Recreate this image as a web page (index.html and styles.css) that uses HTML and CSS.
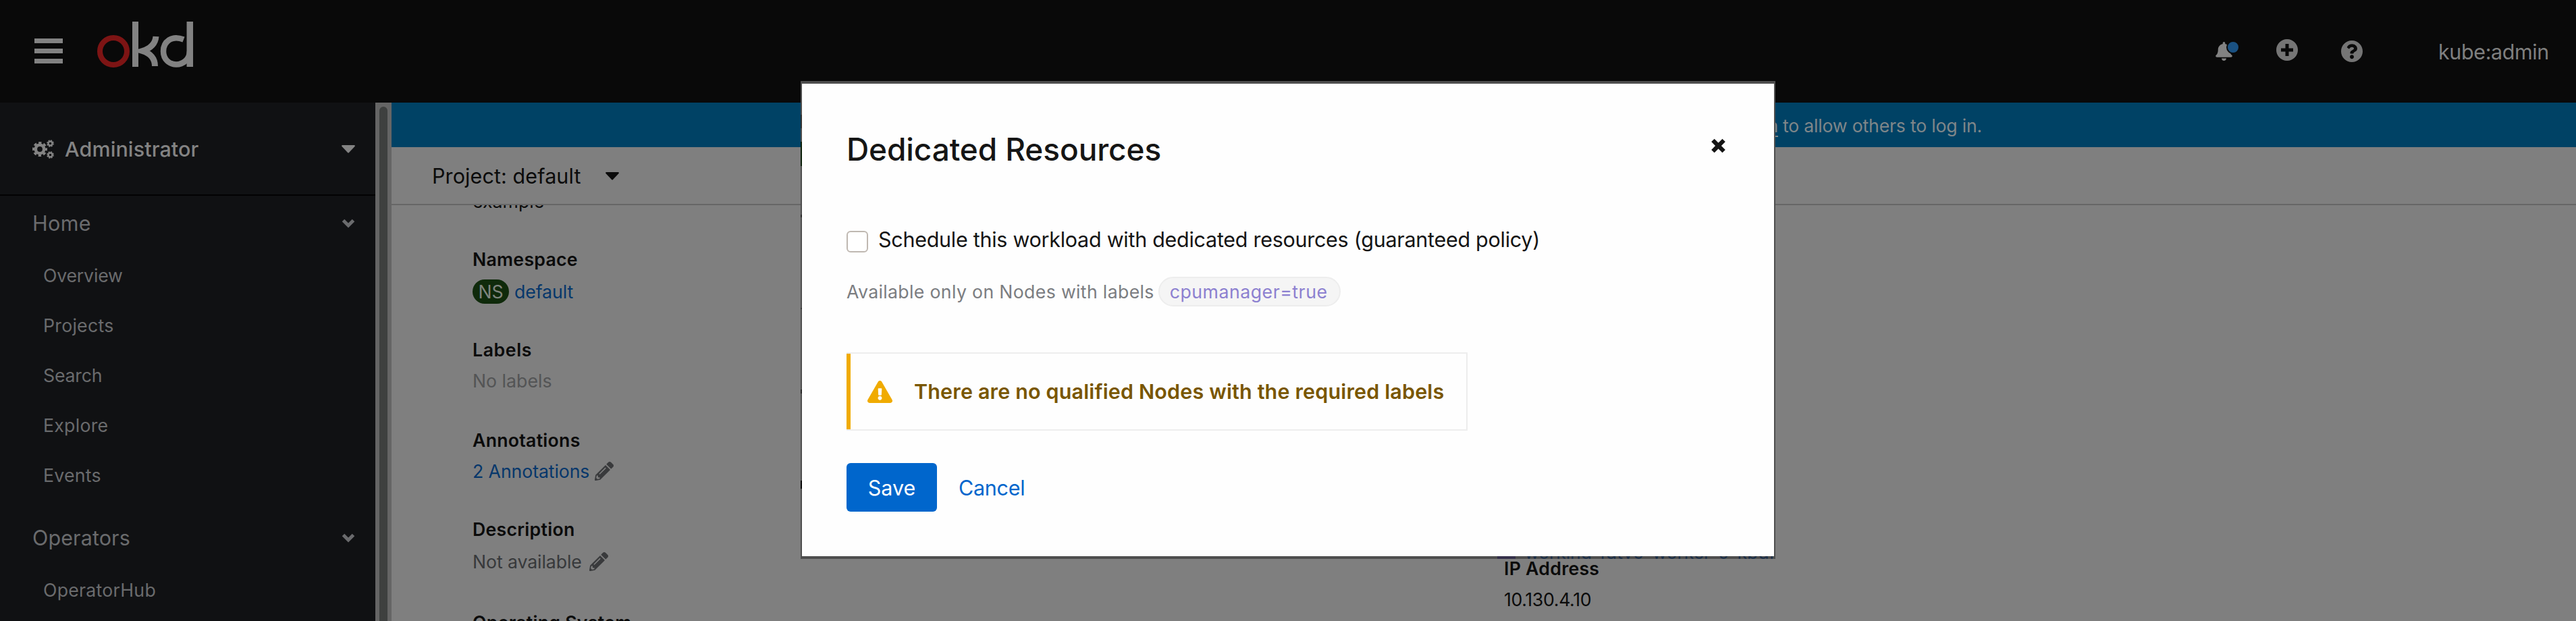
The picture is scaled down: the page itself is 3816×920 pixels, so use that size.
FILE: index.html
```html
<!DOCTYPE html>
<html lang="en">
<head>
<meta charset="utf-8">
<title>OKD</title>
<link rel="stylesheet" href="styles.css">
</head>
<body>
<svg class="defs" width="0" height="0" aria-hidden="true">
  <symbol id="pencil" viewBox="0 0 512 512"><path d="M497.9 142.1l-46.1 46.1c-4.7 4.7-12.3 4.7-17 0l-111-111c-4.7-4.7-4.7-12.3 0-17l46.1-46.1c18.7-18.7 49.1-18.7 67.9 0l60.1 60.1c18.8 18.7 18.8 49.1 0 67.9zM284.2 99.8L21.6 362.4.4 483.9c-2.9 16.4 11.4 30.6 27.8 27.8l121.5-21.3 262.6-262.6c4.7-4.7 4.7-12.3 0-17l-111-111c-4.8-4.7-12.4-4.7-17.1 0zM124.1 339.9c-5.5-5.5-5.5-14.3 0-19.8l154-154c5.5-5.5 14.3-5.5 19.8 0s5.5 14.3 0 19.8l-154 154c-5.5 5.5-14.3 5.5-19.8 0zM88 424h48v36.3l-64.5 11.3-31.1-31.1L51.7 376H88v48z"/></symbol>
  <symbol id="chevron" viewBox="0 0 20 14"><path d="M2.500 2.500 10 10l7.500-7.500" fill="none" stroke="currentColor" stroke-width="5"/></symbol>
  <symbol id="caret" viewBox="0 0 20 12"><path d="M1 0h18q1.500 .5 .5 2L11 11q-1 1-2 0L.5 2Q-.5 .5 1 0z"/></symbol>
</svg>

<header class="masthead">
  <svg class="burger" viewBox="0 0 44 40"><path d="M1 1h42v7H1zM1 16h42v7H1zM1 31h42v7H1z"/></svg>
  <svg class="logo" viewBox="144 30 144 72">
    <ellipse cx="168" cy="76" rx="20" ry="20" stroke="#7d1414" stroke-width="8"/>
    <g stroke="#828282">
      <line x1="200.500" y1="32" x2="200.500" y2="99" stroke-width="9"/>
      <path stroke-width="9" d="M231 54C230 66 222 72 211 75.500 222 79 229.500 86 229.500 98"/>
      <path stroke-width="8.500" d="M272 58.500C254 51.500 242 62 242 76 242 88 251 95.500 261 95.500S281 88 281 76"/>
      <line x1="281.300" y1="32" x2="281.300" y2="99" stroke-width="9.500"/>
    </g>
  </svg>
  <div class="tools">
    <span class="bell">
      <svg viewBox="0 0 448 512"><path d="M224 512c35.320 0 63.970-28.650 63.970-64H160.030c0 35.350 28.650 64 63.970 64zm215.390-149.710c-19.320-20.760-55.470-51.990-55.470-154.290 0-77.700-54.480-139.900-127.940-155.160V32c0-17.670-14.320-32-31.980-32s-31.980 14.330-31.980 32v20.840C118.560 68.100 64.080 130.300 64.080 208c0 102.300-36.150 133.530-55.470 154.290-6 6.450-8.660 14.160-8.610 21.710.11 16.400 12.980 32 32.100 32h383.800c19.120 0 32-15.600 32.100-32 .05-7.550-2.610-15.270-8.610-21.710z"/></svg>
      <i class="dot"></i>
    </span>
    <svg class="plus" viewBox="0 0 32 32"><path fill-rule="evenodd" d="M16 0a16 16 0 1 0 0 32 16 16 0 0 0 0-32zm-2.500 7h5v6.500H25v5h-6.500V25h-5v-6.500H7v-5h6.500z"/></svg>
    <svg class="help" viewBox="8 8 496 496"><path d="M504 256c0 136.997-111.043 248-248 248S8 392.997 8 256C8 119.083 119.043 8 256 8s248 111.083 248 248zM262.655 90c-54.497 0-89.255 22.957-116.549 63.758-3.536 5.286-2.353 12.415 2.715 16.258l34.699 26.310c5.205 3.947 12.621 3.008 16.665-2.122 17.864-22.658 30.113-35.797 57.303-35.797 20.429 0 45.698 13.148 45.698 32.958 0 14.976-12.363 22.667-32.534 33.976C247.128 238.528 216 254.941 216 296v4c0 6.627 5.373 12 12 12h56c6.627 0 12-5.373 12-12v-1.333c0-28.462 83.186-29.647 83.186-106.667 0-58.002-60.165-102-116.531-102zM256 338c-25.365 0-46 20.635-46 46 0 25.364 20.635 46 46 46s46-20.636 46-46c0-25.364-20.635-46-46-46z"/></svg>
    <span class="user">kube:admin</span>
  </div>
</header>

<div class="shell">
  <nav class="sidebar">
    <div class="perspective">
      <svg class="cogs" viewBox="0 0 32 28" stroke="currentColor">
        <circle cx="11" cy="14" r="6.200" stroke-width="4.600"/>
        <circle cx="11" cy="14" r="9.300" stroke-width="3.400" stroke-dasharray="4.200 3.104" stroke-dashoffset="2.100"/>
        <circle cx="26.500" cy="5.500" r="3" stroke-width="2.400"/>
        <circle cx="26.500" cy="5.500" r="4.600" stroke-width="1.500" stroke-dasharray="2.200 1.413"/>
        <circle cx="26.500" cy="22.500" r="3" stroke-width="2.400"/>
        <circle cx="26.500" cy="22.500" r="4.600" stroke-width="1.500" stroke-dasharray="2.200 1.413"/>
      </svg>
      <span>Administrator</span>
      <svg class="caret"><use href="#caret"/></svg>
    </div>
    <div class="section wide"><span>Home</span><svg class="chevron"><use href="#chevron"/></svg></div>
    <div class="item">Overview</div>
    <div class="item roomy">Projects</div>
    <div class="item">Search</div>
    <div class="item roomy">Explore</div>
    <div class="item roomy">Events</div>
    <div class="section spaced"><span>Operators</span><svg class="chevron"><use href="#chevron"/></svg></div>
    <div class="item roomy">OperatorHub</div>
  </nav>
  <div class="scrollbar"><div class="thumb"></div></div>
  <main class="content">
    <div class="banner"><u>n</u><span>to allow others to log in.</span></div>
    <div class="project"><span>Project: default</span><svg class="caret"><use href="#caret"/></svg></div>
    <div class="details">
      <dl class="col">
        <dd class="first">example</dd>
        <dt>Namespace</dt>
        <dd><span class="badge">NS</span><a class="roomy">default</a></dd>
        <dt class="labels">Labels</dt>
        <dd class="near muted">No labels</dd>
        <dt class="later">Annotations</dt>
        <dd class="near"><a>2 Annotations</a><svg class="pencil"><use href="#pencil"/></svg></dd>
        <dt>Description</dt>
        <dd class="grey">Not available<svg class="pencil"><use href="#pencil"/></svg></dd>
        <dt class="last">Operating System</dt>
      </dl>
      <dl class="col network">
        <dt>IP Address</dt>
        <dd class="near ip">10.130.4.10</dd>
      </dl>
    </div>
  </main>
</div>

<div class="frame">
  <section class="modal">
    <div class="modal-head">
      <h1>Dedicated Resources</h1>
      <svg class="close" viewBox="0 0 24 24"><path d="M3.500 3.500l17 17M20.500 3.500l-17 17" stroke="#151515" stroke-width="6.500"/></svg>
    </div>
    <label class="check"><span class="box"></span><span class="check-text">Schedule this workload with dedicated resources (guaranteed policy)</span></label>
    <div class="hint"><span>Available only on Nodes with labels</span><span class="chip">cpumanager=true</span></div>
    <div class="alert">
      <svg viewBox="0 0 576 512"><path d="M569.517 440.013C587.975 472.007 564.806 512 527.940 512H48.054c-36.937 0-59.999-40.055-41.577-71.987L246.423 23.985c18.467-32.009 64.720-31.951 83.154 0l239.940 416.028zM288 354c-25.405 0-46 20.595-46 46s20.595 46 46 46 46-20.595 46-46-20.595-46-46-46zm-43.673-165.346l7.418 136c.347 6.364 5.609 11.346 11.982 11.346h48.546c6.373 0 11.635-4.982 11.982-11.346l7.418-136c.375-6.874-5.098-12.654-11.982-12.654h-63.383c-6.884 0-12.356 5.780-11.981 12.654z"/></svg>
      <span>There are no qualified Nodes with the required labels</span>
    </div>
    <div class="actions"><span class="save">Save</span><span class="cancel">Cancel</span></div>
  </section>
  <div class="node"><i></i><span>working-fdtv9-worker-0-kbdf</span></div>
  <i class="edge"></i>
</div>
</body>
</html>
```
FILE: styles.css
```css
* { box-sizing: border-box; }
body {
  margin: 0;
  width: 3816px;
  height: 920px;
  overflow: hidden;
  position: relative;
  background: #7f7f7f;
  font: 400 26.7px/36px Inter, "Noto Sans", sans-serif;
  color: #0b0b0b;
}
svg { display: block; flex: none; fill: currentColor; }
svg.logo, svg.cogs { fill: none; }
.defs { position: absolute; }
h1, dl, dt, dd { margin: 0; }

/* masthead */
.masthead {
  height: 152px;
  background: #090909;
  color: #7a7a7a;
  display: flex;
  align-items: flex-start;
  padding-left: 50px;
}
.burger { width: 44px; height: 40px; margin-top: 56px; color: #828282; }
.logo { width: 144px; height: 72px; margin: 30px 0 0 50px; }
.tools { margin: 56px 42px 0 auto; display: flex; align-items: flex-start; }
.bell { position: relative; width: 25px; margin-top: 6px; }
.bell svg { width: 25px; height: 28px; color: #828282; }
.dot {
  position: absolute;
  left: 16px;
  top: -2px;
  width: 20px;
  height: 20px;
  border-radius: 50%;
  border: 2px solid #090909;
  background: #1a5182;
}
.plus { width: 32px; height: 32px; margin: 2px 0 0 65px; color: #757575; }
.help { width: 32px; height: 32px; margin: 4px 0 0 64px; color: #757575; }
.user {
  margin: 1px 0 0 112px;
  font-size: 30.5px;
  line-height: 40px;
  letter-spacing: -.4px;
  width: 162px;
  white-space: nowrap;
  color: #7f7f7f;
}

/* navigation */
.shell { display: flex; height: 768px; }
.sidebar { width: 556px; background: #101113; color: #6a6b6d; overflow: hidden; }
.perspective {
  height: 138px;
  padding: 2px 30px 0 48px;
  border-bottom: 2px solid #020202;
  display: flex;
  align-items: center;
  font-size: 30.5px;
  font-weight: 500;
  letter-spacing: .1px;
  color: #838383;
}
.cogs { width: 32px; height: 28px; margin-right: 16px; }
.perspective .caret { margin-left: auto; }
.caret { width: 20px; height: 12px; }
.section {
  height: 81px;
  padding: 0 30px 0 48px;
  display: flex;
  align-items: center;
  justify-content: space-between;
  font-size: 30.5px;
  letter-spacing: .1px;
}
.wide { letter-spacing: .4px; }
.chevron { width: 20px; height: 14px; }
.spaced { margin-top: 15px; }
.item { height: 74px; line-height: 74px; padding-left: 64px; letter-spacing: -.2px; }
.roomy { letter-spacing: .25px; }
.scrollbar { width: 24px; background: #656565; padding: 6px 6px 0; }
.thumb { height: 780px; width: 12px; border-radius: 6px; background: #3e403f; }

/* page */
.content { flex: 1; min-width: 0; height: 768px; overflow: hidden; }
.banner {
  height: 66px;
  background: #004265;
  color: #7f8689;
  display: flex;
  gap: 7px;
  padding: 16px 0 0 2038px;
  letter-spacing: -.22px;
}
.banner u { width: 16px; text-align: right; text-underline-offset: 5px; text-decoration-thickness: 2px; }
.project {
  height: 86px;
  border-bottom: 2px solid #666;
  padding: 2px 0 0 60px;
  display: flex;
  align-items: center;
  gap: 36px;
  font-size: 30.5px;
  letter-spacing: .1px;
}
.details { display: flex; height: 616px; overflow: hidden; padding-left: 120px; }
.col { width: 1528px; flex: none; }
dt { font-weight: 600; margin-top: 50px; letter-spacing: .25px; }
dd { height: 36px; margin-top: 12px; display: flex; align-items: center; }
dd.first { margin-top: -24px; }
.labels { letter-spacing: .6px; }
dd.near { margin-top: 10px; }
.later { margin-top: 52px; }
.last { margin-top: 54px; }
.muted { color: #535455; }
.grey { color: #37393b; letter-spacing: -.1px; }
.details a { color: #06376b; letter-spacing: -.1px; }
.badge {
  width: 54px;
  height: 36px;
  border-radius: 18px;
  background: #0f2a0b;
  color: #7f857e;
  text-align: center;
  margin-right: 8px;
}
.pencil { width: 28px; height: 28px; margin-left: 8px; color: #393a3c; }
.grey .pencil { margin-left: 11px; }
.network { padding-top: 470px; }
.ip { letter-spacing: -.35px; }

/* dialog */
.frame {
  position: absolute;
  left: 1186px;
  top: 120px;
  width: 1444px;
  height: 708px;
  padding: 4px 2px;
  background: #4e4e4e;
}
.modal { height: 700px; background: #fefefe; color: #151515; padding: 67px 71px 0 66px; }
.modal-head { display: flex; justify-content: space-between; height: 144px; }
h1 { font-size: 46px; font-weight: 500; line-height: 60px; letter-spacing: -.1px; }
.close { width: 23px; height: 24px; margin-top: 13px; }
.check { height: 40px; display: flex; align-items: flex-start; }
.box { width: 32px; height: 32px; margin-top: 7px; border: 2px solid #bfb8b1; border-radius: 6px; background: #fff; }
.check-text { font-size: 30.5px; line-height: 40px; letter-spacing: -.28px; margin-left: 15px; }
.hint { display: flex; align-items: center; height: 44px; margin-top: 35px; color: #7b7d81; letter-spacing: .33px; }
.chip {
  width: 270px;
  height: 44px;
  margin-left: 6px;
  border: 2px solid #ededed;
  border-radius: 22px;
  background: #f5f5f5;
  color: #8c80d0;
  line-height: 40px;
  padding-left: 15px;
  letter-spacing: .5px;
}
.alert {
  width: 920px;
  height: 116px;
  margin-top: 68px;
  border: solid #ededed;
  border-width: 2px 2px 2px 0;
  background: linear-gradient(#f0ab00, #f0ab00) 0 0 / 6px 100% no-repeat border-box;
  display: flex;
  align-items: center;
  padding-left: 31px;
  color: #795600;
  font-size: 30.5px;
  font-weight: 600;
  letter-spacing: .15px;
  white-space: nowrap;
}
.alert svg { width: 37px; height: 33px; color: #f0ab00; margin-right: 32px; }
.actions { display: flex; margin-top: 48px; font-size: 30.5px; line-height: 73px; }
.save { width: 134px; height: 72px; border-radius: 6px; background: #06c; color: #fff; text-align: center; }
.cancel { color: #06c; margin-left: 32px; letter-spacing: -.3px; }
.node {
  position: absolute;
  left: 1032px;
  bottom: 0;
  width: 412px;
  height: 4px;
  overflow: hidden;
  display: flex;
  color: #1c3049;
}
.node i { width: 32px; height: 4px; background: #35304a; margin-right: 13px; }
.node span { margin-top: -24px; white-space: nowrap; letter-spacing: -.2px; }
.edge {
  position: absolute;
  left: 0;
  top: 50px;
  width: 2px;
  height: 556px;
  background: linear-gradient(#333 0 20px, transparent 0 40px, #0b1f09 0 76px, transparent 0 148px, #2a2a2a 0 152px, transparent 0 286px, #333 0 288px, transparent 0 407px, #262626 0 413px, transparent 0 542px, #050505 0 554px, transparent 0);
}
```
